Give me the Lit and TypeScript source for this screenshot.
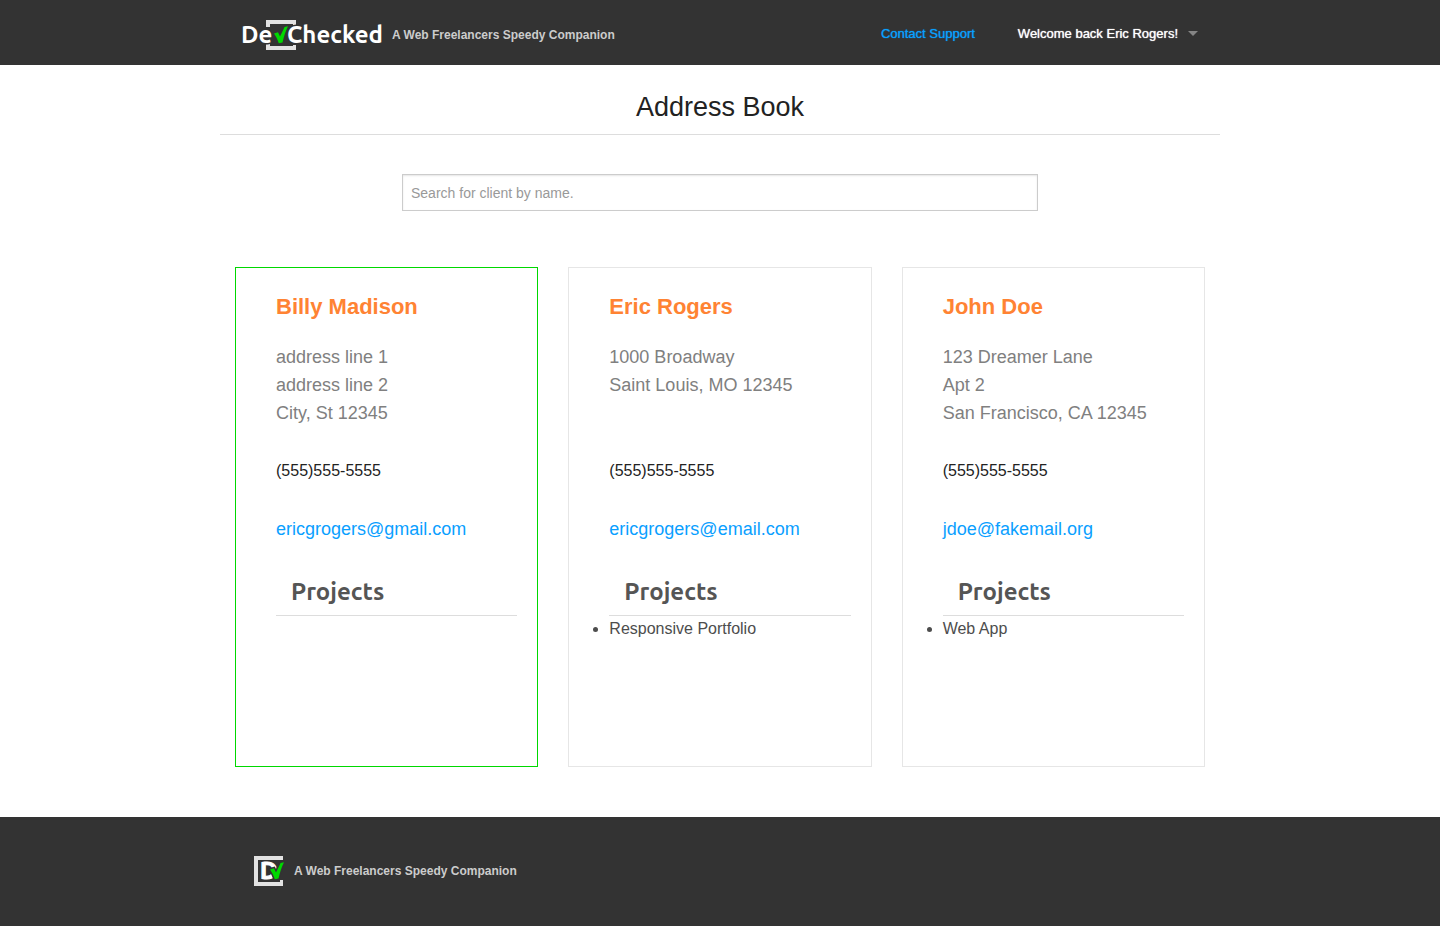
import { LitElement, html, css, svg } from "lit";
import { customElement, property } from "lit/decorators.js";

interface Client {
  name: string;
  address: string[];
  phone: string;
  email: string;
  projects: string[];
  active?: boolean;
}

const CLIENTS: Client[] = [
  {
    name: "Billy Madison",
    address: ["address line 1", "address line 2", "City, St 12345"],
    phone: "(555)555-5555",
    email: "ericgrogers@gmail.com",
    projects: [],
    active: true,
  },
  {
    name: "Eric Rogers",
    address: ["1000 Broadway", "Saint Louis, MO 12345"],
    phone: "(555)555-5555",
    email: "ericgrogers@email.com",
    projects: ["Responsive Portfolio"],
  },
  {
    name: "John Doe",
    address: ["123 Dreamer Lane", "Apt 2", "San Francisco, CA 12345"],
    phone: "(555)555-5555",
    email: "jdoe@fakemail.org",
    projects: ["Web App"],
  },
];

const TAGLINE = "A Web Freelancers Speedy Companion";

const CHECK = svg`<path d="M0 7.500L4 6.300L6 10.500L10.600 0.900L14 0.300C11.500 5 10 10.500 8.500 16.500L4.800 17.200C3.600 13.500 2 10.500 0 7.500Z" fill="#00d800"/>`;

@customElement("client-card")
export class ClientCard extends LitElement {
  @property({ attribute: false }) client!: Client;

  static styles = css`
    :host { display: block; }
    .card {
      box-sizing: border-box;
      height: 100%;
      min-height: 500px;
      padding: 24px 20px 24px 40px;
      border: 1px solid #e6e6e6;
      line-height: 28px;
    }
    .active { border-color: #00d800; }
    .name { margin: 0; font-size: 22px; line-height: 30px; color: #ff8333; }
    .address { min-height: 84px; margin-top: 21px; font-size: 18px; font-style: normal; color: #808080; }
    .phone { margin: 30px 0 0; font-size: 16px; color: #222; }
    .email { margin: 30px 0 0; font-size: 18px; }
    .email a { color: #0aa0ff; text-decoration: none; }
    .projects-title {
      margin: 34px 0 0;
      padding: 0 15px 8px;
      border-bottom: 1px solid #ddd;
      font: bold 24px/30px Ubuntu, "Open Sans", "Noto Sans", sans-serif;
      color: #555;
    }
    .projects { margin: 0; padding: 0; font-size: 16px; line-height: 26px; color: #4d4d4d; }
  `;

  render() {
    const c = this.client;
    return html`
      <article class="card ${c.active ? "active" : ""}">
        <h2 class="name">${c.name}</h2>
        <address class="address">${c.address.map((line) => html`<div>${line}</div>`)}</address>
        <p class="phone">${c.phone}</p>
        <p class="email"><a href="mailto:${c.email}">${c.email}</a></p>
        <h3 class="projects-title">Projects</h3>
        <ul class="projects">${c.projects.map((p) => html`<li>${p}</li>`)}</ul>
      </article>
    `;
  }
}

@customElement("app-root")
export class AppRoot extends LitElement {
  static styles = css`
    :host {
      display: flex;
      flex-direction: column;
      min-height: 100vh;
      background: #fff;
      font-family: "Helvetica Neue", "Liberation Sans", Arial, sans-serif;
      color: #222;
    }
    .bar { background: #333; }
    .row { box-sizing: border-box; width: 100%; max-width: 1000px; margin: 0 auto; }
    .top { display: flex; align-items: center; min-height: 65px; padding: 2px 22px 0 20px; }
    .brand { display: flex; align-items: center; gap: 10px; text-decoration: none; }
    .top .brand { padding-top: 3px; }
    .brand svg { display: block; flex: none; }
    .wordmark { font: bold 24px Ubuntu, "Open Sans", "Noto Sans", sans-serif; }
    .cutout { stroke: #333; stroke-width: 3px; paint-order: stroke; }
    .tagline { font-size: 12px; line-height: 16px; font-weight: bold; color: #ccc; }
    .nav { display: flex; align-items: center; gap: 43px; margin-left: auto; font-size: 13px; line-height: 16px; }
    .support { color: #0aa0ff; text-decoration: none; text-shadow: 0 0 1px #0aa0ff; }
    .account {
      display: flex; align-items: center; gap: 10px;
      padding: 0; border: 0; background: none;
      font: inherit; color: #fff; text-shadow: 0 0 1px #fff; cursor: pointer;
    }
    .title {
      padding: 24px 0 8px;
      border-bottom: 1px solid #ddd;
      font-size: 27px; line-height: 37px; font-weight: normal; text-align: center;
    }
    .search { display: flex; justify-content: center; padding: 39px 15px 0; }
    .field {
      box-sizing: border-box; width: 636px; height: 37px; padding: 8px;
      border: 1px solid #ccc; border-radius: 0; background: #fff;
      box-shadow: inset 0 1px 2px rgba(0, 0, 0, 0.1);
      font: 14px "Helvetica Neue", "Liberation Sans", Arial, sans-serif; color: #222;
    }
    .field::placeholder { color: #999; opacity: 1; }
    .cards { display: grid; grid-template-columns: repeat(3, 1fr); gap: 30px; padding: 56px 15px 50px; }
    .foot { flex: 1; }
    .bottom { padding: 38px 34px 40px; }
    @media (max-width: 760px) {
      .cards { grid-template-columns: 1fr; }
      .top { flex-wrap: wrap; gap: 12px; padding: 12px 22px; }
    }
  `;

  render() {
    return html`
      <header class="bar">
        <div class="row top">
          <a class="brand" href="#">
            <svg width="142" height="30" viewBox="0 0 142 30" role="img" aria-label="DevChecked">
              <path d="M26 7V0H56V6H53V4H30V7Z M26 23H30V26H53V25H56V30H26Z" fill="#e2e2e2"/>
              <text class="wordmark cutout" x="1" y="23" fill="#fff">De</text>
              <text class="wordmark cutout" x="47" y="23" fill="#fff">Checked</text>
              <g transform="translate(34 6)">${CHECK}</g>
            </svg>
            <span class="tagline">${TAGLINE}</span>
          </a>
          <nav class="nav">
            <a class="support" href="#">Contact Support</a>
            <button class="account" type="button" aria-haspopup="true">
              Welcome back Eric Rogers!
              <svg width="10" height="5" viewBox="0 0 10 5" aria-hidden="true"><path d="M0 0H10L5 5Z" fill="#858585"/></svg>
            </button>
          </nav>
        </div>
      </header>
      <main>
        <h1 class="row title">Address Book</h1>
        <form class="row search" role="search">
          <input class="field" type="search" aria-label="Search for client by name" placeholder="Search for client by name." />
        </form>
        <section class="row cards">
          ${CLIENTS.map((c) => html`<client-card .client=${c}></client-card>`)}
        </section>
      </main>
      <footer class="bar foot">
        <div class="row bottom">
          <a class="brand" href="#">
            <svg width="30" height="31" viewBox="0 0 30 31" role="img" aria-label="DevChecked">
              <path d="M0 1H29V5H4V27H26V25H29V31H0Z" fill="#e2e2e2"/>
              <text class="wordmark" x="6" y="24" fill="#fff" stroke="#fff" stroke-width="1">D</text>
              <g class="cutout" transform="translate(16 7)">${CHECK}</g>
            </svg>
            <span class="tagline">${TAGLINE}</span>
          </a>
        </div>
      </footer>
    `;
  }
}
